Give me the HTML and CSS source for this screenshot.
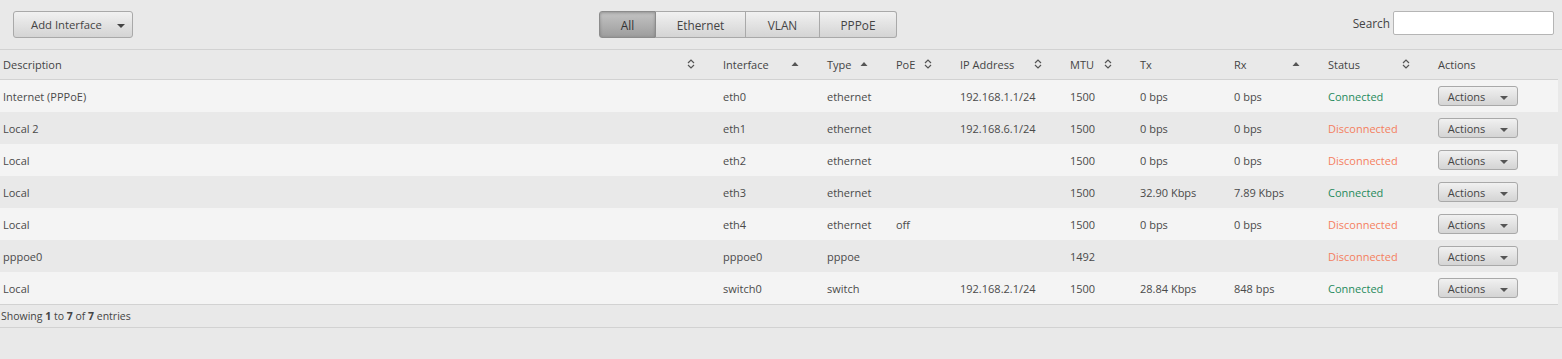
FILE: index.html
```html
<!DOCTYPE html>
<html lang="en">
<head>
    <meta charset="UTF-8" />
    <title>Interfaces</title>
    <link rel="stylesheet" href="styles.css">
</head>
<body>
    <div class="toolbar">
        <button class="btn add-btn">Add Interface <span class="caret"></span></button>
        <div class="btn-group">
            <button class="btn group-btn active">All</button>
            <button class="btn group-btn">Ethernet</button>
            <button class="btn group-btn">VLAN</button>
            <button class="btn group-btn">PPPoE</button>
        </div>
        <label class="search">Search <input type="text" class="search-input"></label>
    </div>

    <table class="iface-table">
        <colgroup>
            <col style="width: 720px">
            <col style="width: 104px">
            <col style="width: 69px">
            <col style="width: 64px">
            <col style="width: 110px">
            <col style="width: 70px">
            <col style="width: 94px">
            <col style="width: 94px">
            <col style="width: 110px">
            <col>
        </colgroup>
        <thead>
            <tr>
                <th>Description<svg class="sort" viewBox="0 0 8 10"><path d="M1 4 L4 1 L7 4 M1 6 L4 9 L7 6" /></svg></th>
                <th>Interface<svg class="sort asc" viewBox="0 0 8 10"><path d="M0.5 7 L4 3 L7.5 7 Z" /></svg></th>
                <th>Type<svg class="sort asc" viewBox="0 0 8 10"><path d="M0.5 7 L4 3 L7.5 7 Z" /></svg></th>
                <th>PoE<svg class="sort" viewBox="0 0 8 10"><path d="M1 4 L4 1 L7 4 M1 6 L4 9 L7 6" /></svg></th>
                <th>IP Address<svg class="sort" viewBox="0 0 8 10"><path d="M1 4 L4 1 L7 4 M1 6 L4 9 L7 6" /></svg></th>
                <th>MTU<svg class="sort" viewBox="0 0 8 10"><path d="M1 4 L4 1 L7 4 M1 6 L4 9 L7 6" /></svg></th>
                <th>Tx</th>
                <th>Rx<svg class="sort asc" viewBox="0 0 8 10"><path d="M0.5 7 L4 3 L7.5 7 Z" /></svg></th>
                <th>Status<svg class="sort" viewBox="0 0 8 10"><path d="M1 4 L4 1 L7 4 M1 6 L4 9 L7 6" /></svg></th>
                <th>Actions</th>
            </tr>
        </thead>
        <tbody>
            <tr>
                <td>Internet (PPPoE)</td><td>eth0</td><td>ethernet</td><td></td><td>192.168.1.1/24</td><td>1500</td><td>0 bps</td><td>0 bps</td>
                <td class="ok">Connected</td>
                <td><button class="btn act-btn">Actions <span class="caret"></span></button></td>
            </tr>
            <tr>
                <td>Local 2</td><td>eth1</td><td>ethernet</td><td></td><td>192.168.6.1/24</td><td>1500</td><td>0 bps</td><td>0 bps</td>
                <td class="down">Disconnected</td>
                <td><button class="btn act-btn">Actions <span class="caret"></span></button></td>
            </tr>
            <tr>
                <td>Local</td><td>eth2</td><td>ethernet</td><td></td><td></td><td>1500</td><td>0 bps</td><td>0 bps</td>
                <td class="down">Disconnected</td>
                <td><button class="btn act-btn">Actions <span class="caret"></span></button></td>
            </tr>
            <tr>
                <td>Local</td><td>eth3</td><td>ethernet</td><td></td><td></td><td>1500</td><td>32.90 Kbps</td><td>7.89 Kbps</td>
                <td class="ok">Connected</td>
                <td><button class="btn act-btn">Actions <span class="caret"></span></button></td>
            </tr>
            <tr>
                <td>Local</td><td>eth4</td><td>ethernet</td><td>off</td><td></td><td>1500</td><td>0 bps</td><td>0 bps</td>
                <td class="down">Disconnected</td>
                <td><button class="btn act-btn">Actions <span class="caret"></span></button></td>
            </tr>
            <tr>
                <td>pppoe0</td><td>pppoe0</td><td>pppoe</td><td></td><td></td><td>1492</td><td></td><td></td>
                <td class="down">Disconnected</td>
                <td><button class="btn act-btn">Actions <span class="caret"></span></button></td>
            </tr>
            <tr>
                <td>Local</td><td>switch0</td><td>switch</td><td></td><td>192.168.2.1/24</td><td>1500</td><td>28.84 Kbps</td><td>848 bps</td>
                <td class="ok">Connected</td>
                <td><button class="btn act-btn">Actions <span class="caret"></span></button></td>
            </tr>
        </tbody>
    </table>

    <div class="table-info">Showing <b>1</b> to <b>7</b> of <b>7</b> entries</div>
</body>
</html>
```

FILE: styles.css
```css
:root {
    --bg-color: #e9e9e9;
    --row-light: #f4f4f4;
    --line-color: #d2d2d2;
    --text-color: #4a4a4a;
    --ok-color: #1f8a5c;
    --down-color: #f47f60;
}
body {
    font-family: 'Open Sans', 'Liberation Sans', Arial, sans-serif;
    margin: 0;
    padding: 0;
    background: var(--bg-color);
    color: var(--text-color);
    font-size: 11px;
}
.toolbar {
    display: flex;
    align-items: flex-start;
    height: 38px;
    padding: 11px 8px 0 13px;
    border-bottom: 1px solid var(--line-color);
}
.btn {
    font-family: inherit;
    color: #444;
    background: linear-gradient(#f1f1f1, #d4d4d4);
    border: 1px solid #a9a9a9;
    border-radius: 3px;
    cursor: pointer;
    padding: 0;
}
.caret {
    display: inline-block;
    width: 0;
    height: 0;
    border-left: 4px solid transparent;
    border-right: 4px solid transparent;
    border-top: 4px solid #444;
    vertical-align: middle;
    margin-left: 11px;
}
.add-btn {
    width: 120px;
    height: 27px;
    font-size: 11.3px;
    text-align: left;
    padding-left: 17px;
}
.add-btn .caret {
    margin-left: 12px;
}
.btn-group {
    display: flex;
    margin-left: 466px;
}
.group-btn {
    height: 27px;
    font-size: 11.8px;
    border-radius: 0;
    border-left: none;
}
.group-btn:nth-child(1) { width: 57px; border-left: 1px solid #999; border-radius: 3px 0 0 3px; }
.group-btn:nth-child(2) { width: 90px; }
.group-btn:nth-child(3) { width: 74px; }
.group-btn:nth-child(4) { width: 77px; border-radius: 0 3px 3px 0; }
.group-btn.active {
    background: linear-gradient(#c4c4c4, #9d9d9d);
    border-color: #8c8c8c;
    box-shadow: inset 0 1px 3px rgba(0, 0, 0, 0.25);
    color: #333;
}
.search {
    margin-left: auto;
    display: flex;
    align-items: center;
    gap: 3px;
    font-size: 11.8px;
    color: #444;
}
.search-input {
    width: 161px;
    margin: 0;
    padding: 0 3px;
    border: 1px solid #b5b5b5;
    border-radius: 2px;
    background: #fff;
    box-sizing: border-box;
    height: 24px;
}
.iface-table {
    width: 1558px;
    border-collapse: collapse;
    table-layout: fixed;
}
.iface-table th {
    text-align: left;
    font-weight: normal;
    color: #444;
    height: 29px;
    padding: 0 0 0 3px;
    border-bottom: 1px solid var(--line-color);
}
.sort {
    float: right;
    width: 8px;
    height: 10px;
    margin-right: 25px;
    margin-top: 2px;
}
.sort path {
    fill: none;
    stroke: #555;
    stroke-width: 1.2;
}
.sort.asc path {
    fill: #555;
    stroke: none;
}
.iface-table td {
    height: 32px;
    padding: 0 0 0 3px;
    white-space: nowrap;
}
.iface-table tbody tr:nth-child(odd) {
    background: var(--row-light);
}
.iface-table tbody tr:nth-child(even) {
    background: var(--bg-color);
}
.iface-table tbody tr:last-child td {
    border-bottom: 1px solid var(--line-color);
}
.ok {
    color: var(--ok-color);
}
.down {
    color: var(--down-color);
}
.act-btn {
    width: 80px;
    height: 20px;
    font-size: 11px;
    vertical-align: middle;
}
.act-btn .caret {
    margin-left: 12px;
    border-top-color: #555;
}
.table-info {
    padding: 1px 1px 0;
    height: 21px;
    line-height: 21px;
    font-size: 10.5px;
    color: #444;
    border-bottom: 1px solid var(--line-color);
    box-shadow: 0 1px 0 #f7f7f7;
}
```
